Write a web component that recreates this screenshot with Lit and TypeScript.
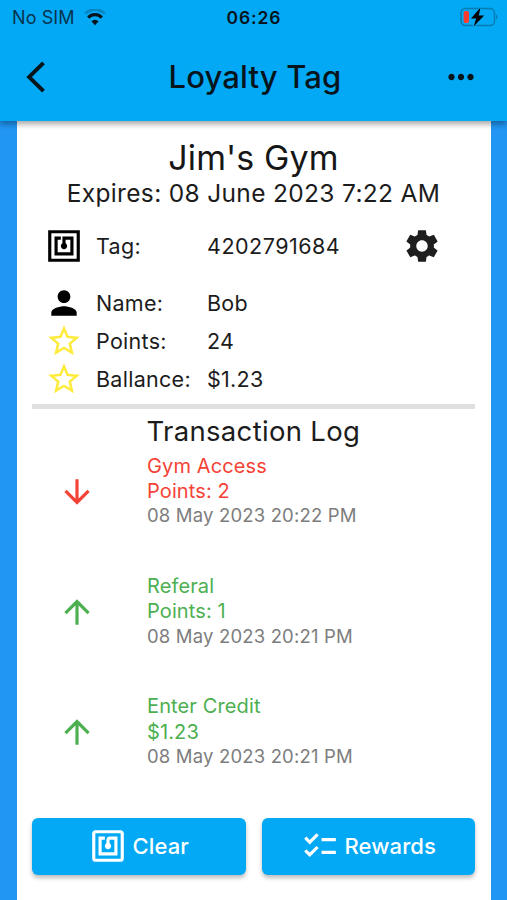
import { LitElement, html, css, svg } from "lit";
import { customElement, property } from "lit/decorators.js";

const ICONS: Record<string, string> = {
  tag: "M22 2H2v20h20V2zm-2 18H4V4h16v16zM18 6h-7v4.28c-.6.35-1 .98-1 1.72 0 1.1.9 2 2 2s2-.9 2-2c0-.74-.4-1.38-1-1.72V8h3v8H8V8h2V6H6v12h12V6z",
  nfc: "M20 2H4c-1.1 0-2 .9-2 2v16c0 1.1.9 2 2 2h16c1.1 0 2-.9 2-2V4c0-1.1-.9-2-2-2zm0 18H4V4h16v16zM18 6h-5c-1.1 0-2 .9-2 2v2.28c-.6.35-1 .98-1 1.72 0 1.1.9 2 2 2s2-.9 2-2c0-.74-.4-1.38-1-1.72V8h3v8H8V8h2V6H6v12h12V6z",
  person:
    "M12 12c2.21 0 4-1.79 4-4s-1.79-4-4-4-4 1.79-4 4 1.79 4 4 4zm0 2c-2.67 0-8 1.34-8 4v2h16v-2c0-2.66-5.33-4-8-4z",
  star: "M22 9.24l-7.19-.62L12 2 9.19 8.63 2 9.24l5.46 4.73L5.82 21 12 17.27 18.18 21l-1.63-7.03L22 9.24zM12 15.4l-3.76 2.27 1-4.28-3.32-2.88 4.38-.38L12 6.1l1.71 4.04 4.38.38-3.32 2.88 1 4.28L12 15.4z",
  down: "M20 12l-1.41-1.41L13 16.17V4h-2v12.17l-5.58-5.59L4 12l8 8 8-8z",
  up: "M4 12l1.41 1.41L11 7.83V20h2V7.83l5.58 5.59L20 12l-8-8-8 8z",
  back: "M17.6 3.9L15.85 2.2 5.9 12l9.95 9.8 1.75-1.7L9.4 12z",
  more: "M6 10c-1.1 0-2 .9-2 2s.9 2 2 2 2-.9 2-2-.9-2-2-2zm12 0c-1.1 0-2 .9-2 2s.9 2 2 2 2-.9 2-2-.9-2-2-2zm-6 0c-1.1 0-2 .9-2 2s.9 2 2 2 2-.9 2-2-.9-2-2-2z",
  gear: "M19.44 12.99l-.01.02c.04-.33.08-.67.08-1.01 0-.34-.03-.66-.07-.99l.01.02 2.44-1.92-2.43-4.22-2.87 1.16.01.01c-.52-.4-1.09-.74-1.71-1h.01L14.44 2H9.57l-.44 3.07h.01c-.62.26-1.19.6-1.71 1l.01-.01-2.88-1.17-2.44 4.22 2.44 1.92.01-.02c-.04.33-.07.65-.07.99 0 .34.03.68.08 1.01l-.01-.02-2.1 1.65-.33.26 2.43 4.2 2.88-1.15-.02-.04c.53.41 1.1.75 1.73 1.01h-.03L9.58 22h4.85s.03-.18.06-.42l.38-2.65h-.01c.62-.26 1.2-.6 1.73-1.01l-.02.04 2.88 1.15 2.43-4.2s-.14-.12-.33-.26l-2.11-1.66zM12 15.6c-1.98 0-3.6-1.62-3.6-3.6s1.62-3.6 3.6-3.6 3.6 1.62 3.6 3.6-1.62 3.6-3.6 3.6z",
  checklist:
    "M22 7h-9v2h9V7zm0 8h-9v2h9v-2zM5.54 11L2 7.46l1.41-1.41 2.12 2.12 4.24-4.24 1.41 1.41L5.54 11zm0 8L2 15.46l1.41-1.41 2.12 2.12 4.24-4.24 1.41 1.41L5.54 19z",
};

@customElement("app-icon")
class AppIcon extends LitElement {
  @property() name = "";
  static styles = css`
    :host { display: block; width: 38px; height: 38px; flex: none; }
    svg { display: block; width: 100%; height: 100%; fill: currentColor; }
  `;
  render() {
    return html`<svg viewBox="0 0 24 24">${svg`<path d=${ICONS[this.name]}></path>`}</svg>`;
  }
}

const ENTRIES = [
  { kind: "down", title: "Gym Access", amount: "Points: 2", date: "08 May 2023 20:22 PM" },
  { kind: "up", title: "Referal", amount: "Points: 1", date: "08 May 2023 20:21 PM" },
  { kind: "up", title: "Enter Credit", amount: "$1.23", date: "08 May 2023 20:21 PM" },
];

@customElement("app-root")
class AppRoot extends LitElement {
  static styles = css`
    * { box-sizing: border-box; }
    :host {
      display: flex; flex-direction: column; height: 900px; width: 507px; overflow: hidden;
      background: #2196f3; color: #1c1c1c; font-family: Inter, "Liberation Sans", sans-serif;
      white-space: nowrap;
    }
    header {
      height: 121px; flex: none; background: #03a9f4; color: #06141c; position: relative; z-index: 1;
      box-shadow: 0 3px 6px rgba(0, 0, 0, 0.36);
    }
    .status { height: 34px; display: grid; grid-template-columns: 1fr auto 1fr; align-items: center; padding: 0 9px 0 12px; }
    .carrier { display: flex; align-items: center; gap: 9px; font-size: 18px; letter-spacing: 0.1px; color: #073450; }
    .wifi { width: 22px; height: 17px; display: block; }
    .clock { font-size: 17.5px; font-weight: 600; letter-spacing: 0.9px; margin-left: -2px; }
    .battery { width: 38px; height: 20px; justify-self: end; display: block; }
    .bar { height: 86px; display: grid; grid-template-columns: 60px 1fr 60px; align-items: center; padding: 0 14px 0 17px; }
    .bar h1 { margin: 0 0 1px; font-size: 31px; font-weight: 450; letter-spacing: 0.15px; text-align: center; color: #06141c; }
    .bar app-icon { color: #06141c; }
    .more { justify-self: end; margin-right: 13px; }
    main { flex: 1; margin: 0 16px 0 17px; padding: 0 16px 0 15px; background: #fff; display: flex; flex-direction: column; }
    .name { margin-top: 16px; height: 41px; line-height: 41px; font-size: 34px; text-align: center; letter-spacing: 0.1px; color: #161616; }
    .expires { height: 30px; line-height: 30px; font-size: 24.5px; text-align: center; letter-spacing: 0.33px; }
    .row { height: 38px; display: grid; grid-template-columns: 64px 111px 196px 38px; align-items: center; font-size: 21.5px; line-height: 26px; letter-spacing: 0.28px; }
    .row app-icon { margin-left: 13px; color: #000; }
    .row app-icon.gold { color: #ffeb3b; }
    .row app-icon.gear { margin-left: 0; color: #1e1e1e; }
    .number { letter-spacing: 0.5px; }
    .first { margin: 19px 0 19px; }
    .rule { height: 5px; margin-top: 6px; flex: none; background: #e0e0e0; }
    .log-title { height: 36px; margin: 4px 0 0 114.5px; line-height: 36px; font-size: 27.5px; letter-spacing: 0.32px; }
    .entry { height: 120.3px; display: grid; grid-template-columns: 115px 1fr; font-size: 20px; line-height: 25.4px; padding-top: 4.5px; letter-spacing: 0.12px; }
    .entry app-icon { margin: 19px 0 0 25.5px; }
    .down { color: #f44336; }
    .up { color: #4caf50; }
    .date { color: #7d7d7d; font-size: 18.5px; line-height: 23px; letter-spacing: 0.17px; }
    .actions { display: grid; grid-template-columns: 1fr 1fr; gap: 16px; margin-top: 8px; }
    button {
      border: 0; height: 57px; border-radius: 6px; background: #03a9f4; color: #fff; font: 500 22px/28px Inter, sans-serif;
      display: flex; align-items: center; justify-content: center; gap: 6px; padding: 0; letter-spacing: 0.1px;
      box-shadow: 0 3px 4px rgba(0, 0, 0, 0.26);
    }
  `;

  render() {
    return html`
      <header>
        <div class="status">
          <div class="carrier">
            <span>No SIM</span>
            <svg class="wifi" viewBox="0 0 22 17">
              <path d="M1.2 4.6A14 14 0 0 1 20.8 4.6" fill="none" stroke="#0587c3" stroke-width="2.8"></path>
              <path d="M4.2 8.6A9.4 9.4 0 0 1 17.8 8.6" fill="none" stroke="#06141c" stroke-width="3.2"></path>
              <path d="M7.4 12.3A5 5 0 0 1 14.6 12.3L11 16.2z" fill="#06141c"></path>
            </svg>
          </div>
          <div class="clock">06:26</div>
          <svg class="battery" viewBox="0 0 38 20">
            <rect x="1" y="1.5" width="33.5" height="17" rx="4.5" fill="none" stroke="#067cb0" stroke-width="1.5"></rect>
            <path d="M36 7.5q1.6.8 1.6 2.5t-1.6 2.5z" fill="#067cb0"></path>
            <rect x="3.6" y="4" width="5.4" height="12" rx="2" fill="#ff3b30"></rect>
            <path d="M20.5 0.6L11 11.4h5.2L13.6 19.4 24.2 8.4h-5.4z" fill="#000" stroke="#03a9f4" stroke-width="2" paint-order="stroke"></path>
          </svg>
        </div>
        <div class="bar">
          <app-icon name="back"></app-icon>
          <h1>Loyalty Tag</h1>
          <app-icon class="more" name="more"></app-icon>
        </div>
      </header>
      <main>
        <div class="name">Jim's Gym</div>
        <div class="expires">Expires: 08 June 2023 7:22 AM</div>
        <div class="row first">
          <app-icon name="tag"></app-icon><span>Tag:</span><span class="number">4202791684</span>
          <app-icon class="gear" name="gear"></app-icon>
        </div>
        <div class="row"><app-icon name="person"></app-icon><span>Name:</span><span>Bob</span></div>
        <div class="row"><app-icon class="gold" name="star"></app-icon><span>Points:</span><span>24</span></div>
        <div class="row"><app-icon class="gold" name="star"></app-icon><span>Ballance:</span><span>$1.23</span></div>
        <div class="rule"></div>
        <div class="log-title">Transaction Log</div>
        ${ENTRIES.map(
          (e) => html`<div class="entry ${e.kind}">
            <app-icon name=${e.kind}></app-icon>
            <div>
              <div>${e.title}</div>
              <div>${e.amount}</div>
              <div class="date">${e.date}</div>
            </div>
          </div>`
        )}
        <div class="actions">
          <button><app-icon name="nfc"></app-icon>Clear</button>
          <button><app-icon name="checklist"></app-icon>Rewards</button>
        </div>
      </main>
    `;
  }
}
